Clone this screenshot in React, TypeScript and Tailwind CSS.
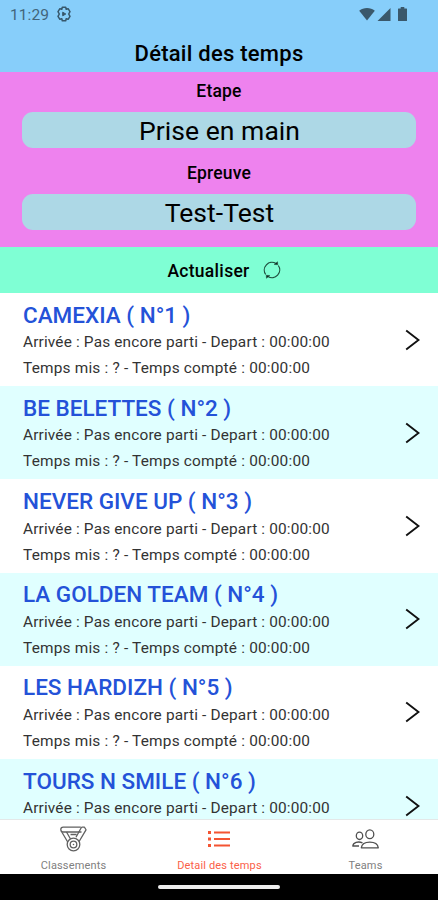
import React from 'react';

const teams = ['CAMEXIA', 'BE BELETTES', 'NEVER GIVE UP', 'LA GOLDEN TEAM', 'LES HARDIZH', 'TOURS N SMILE'];

const StatusBar: React.FC = () => (
  <div className="flex h-7 items-center pl-[10px] pr-[31px] text-[#42657b]">
    <span className="pt-px text-[15.5px] leading-7 tracking-[0.1px]">11:29</span>
    <svg className="ml-[7px]" width="16" height="16" viewBox="0 0 16 16" fill="none" stroke="#36566a" strokeWidth="1.5" strokeLinejoin="round">
      <path d="M6.3 1.2h3.4l.5 2 1.9-.5 1.9 3L12.7 8l1.3 2.3-1.9 3-1.9-.5-.5 2H6.300l-.5-2-1.900.5-1.900-3L3.300 8 2 5.700l1.900-3 1.900.5z" />
      <path d="M6.700 6.200v3.600L9.800 8z" fill="#36566a" strokeWidth="1" />
    </svg>
    <div className="ml-auto flex items-center text-[#3a586b]">
      <svg width="16" height="14" viewBox="0 0 16 14" fill="currentColor">
        <path d="M8 13.500.2 3.800C4.500.1 11.500.1 15.800 3.800z" />
      </svg>
      <svg className="ml-[2px]" width="14" height="13" viewBox="0 0 13 13" fill="currentColor">
        <path d="M0 13 13 0v13z" />
      </svg>
      <svg className="ml-[7px]" width="9" height="14" viewBox="0 0 9 14" fill="currentColor">
        <path d="M2.700 0h3.600v1.500H8.500a.5.500 0 0 1 .5.500v11.500a.5.500 0 0 1-.5.500h-8a.5.500 0 0 1-.5-.5V2a.5.500 0 0 1 .5-.5h2.200z" />
      </svg>
    </div>
  </div>
);

const Field: React.FC<{ label: string; value: string }> = ({ label, value }) => (
  <div className="h-[82px]">
    <div className="flex h-10 items-center justify-center pb-[2px] text-[17.5px] font-medium tracking-[0.2px]">{label}</div>
    <div className="flex h-9 items-center justify-center rounded-[11px] bg-[#add8e6] pt-[2px] pl-px text-[26.5px] tracking-[0.05px]">{value}</div>
  </div>
);

const TeamRow: React.FC<{ name: string; number: number }> = ({ name, number }) => (
  <div className="flex h-[93.2px] shrink-0 items-center justify-between pl-[23px] pr-[18px] odd:bg-white even:bg-[#e0ffff]">
    <div className="h-full pt-[7.7px] text-[15.4px] tracking-[0.16px] text-[#333]">
      <div className="h-[28.6px] text-[22.5px] leading-[28px] font-medium tracking-normal whitespace-pre text-[#2452d8]">{`${name} ( N°${number} )`}</div>
      <div className="h-[26px] leading-[26px] whitespace-nowrap">Arrivée : Pas encore parti - Depart : 00:00:00</div>
      <div className="h-[26px] leading-[26px] tracking-[0.2px] whitespace-nowrap">Temps mis : ? - Temps compté : 00:00:00</div>
    </div>
    <svg width="15" height="22" viewBox="0 0 15 22" fill="none" stroke="#111" strokeWidth="1.9">
      <path d="M1.200 1.500 13.500 11 1.200 20.500" />
    </svg>
  </div>
);

const Tab: React.FC<{ label: string; active?: boolean; children: React.ReactNode }> = ({ label, active, children }) => (
  <div className={`flex flex-1 flex-col items-center ${active ? 'text-[#fb6048]' : 'text-[#808080]'}`}>
    <div className="flex h-[39px] items-center">{children}</div>
    <div className="pt-px pl-px text-[11px] leading-[16px] tracking-[0.15px] whitespace-nowrap">{label}</div>
  </div>
);

const App: React.FC = () => (
  <div className="flex h-[900px] w-[438px] flex-col overflow-hidden bg-white font-[Roboto,sans-serif] text-black">
    <header className="h-[72px] shrink-0 bg-[#87cefa]">
      <StatusBar />
      <h1 className="pt-[10px] text-center text-[22px] leading-[32px] font-medium tracking-[0.25px]">Détail des temps</h1>
    </header>

    <section className="h-[175px] shrink-0 bg-[#ee82ee] px-[22px]">
      <Field label="Etape" value="Prise en main" />
      <Field label="Epreuve" value="Test-Test" />
    </section>

    <button className="flex h-[46px] shrink-0 items-center justify-center bg-[#7fffd4] pt-[3px] pl-[10px] text-[17.5px] font-medium tracking-[0.3px]">
      Actualiser
      <svg className="mb-[4px] ml-[13px]" width="18" height="18" viewBox="0 0 18 18" fill="none" stroke="#205040" strokeWidth="1.2">
        <path d="M2.700 13.500A7.700 7.700 0 0 1 13 2.500M15.300 4.500A7.700 7.700 0 0 1 5 15.500" />
        <path d="m11.200 3.500 3.600.2-.3-3zM6.800 14.500l-3.600-.2.3 3z" fill="#102820" strokeWidth=".5" />
      </svg>
    </button>

    <main className="flex min-h-0 flex-1 flex-col overflow-hidden">
      {teams.map((name, i) => (
        <TeamRow key={name} name={name} number={i + 1} />
      ))}
    </main>

    <nav className="flex h-[55px] shrink-0 border-t border-[#e4e8e8] bg-white">
      <Tab label="Classements">
        {/* medal */}
        <svg className="ml-px" width="27" height="26" viewBox="0 0 27 26" fill="none" stroke="#606060" strokeWidth="1.3" strokeLinejoin="round">
          <path d="M21.500 6H3.200a2.400 2.400 0 0 1 0-4.800h17.600" />
          <path d="M1.200 5 8 16.500M6.500 6l4 7" />
          <path d="M21.500 1.200h3l1.500 2.600-7.500 12.700M21.500 1.200l-5.500 10M10.500 8.500h6" />
          <circle cx="13.500" cy="18.500" r="6.300" fill="white" />
          <circle cx="13.500" cy="18.500" r="3.300" />
          <path d="M12.800 18.500h1.400" />
        </svg>
      </Tab>
      <Tab label="Detail des temps" active>
        <svg width="22" height="18" viewBox="0 0 22 18" fill="#f45432">
          <path d="M0 1h3v3H0zM0 7.500h3v3H0zM0 14h3v3H0zM6 1.500h16v2H6zM6 8h16v2H6zM6 14.500h16v2H6z" />
        </svg>
      </Tab>
      <Tab label="Teams">
        <svg className="ml-px" width="27" height="20" viewBox="0 0 27 20" fill="none" stroke="#505050" strokeWidth="1.3" strokeLinejoin="round">
          <ellipse cx="17.800" cy="5.200" rx="4" ry="4.400" />
          <path d="M9.300 18.800c.5-3.500 4-5.600 8.500-5.600s8 2.100 8.500 5.600z" />
          <ellipse cx="7.500" cy="6.800" rx="3.200" ry="3.700" />
          <path d="M10.500 13.800C6 12 1.200 13.500.8 17h6.200" />
        </svg>
      </Tab>
    </nav>

    <footer className="flex h-[26px] shrink-0 justify-center bg-black pt-[11px]">
      <div className="h-[4px] w-[122px] rounded-full bg-[#ededed]" />
    </footer>
  </div>
);

export default App;
